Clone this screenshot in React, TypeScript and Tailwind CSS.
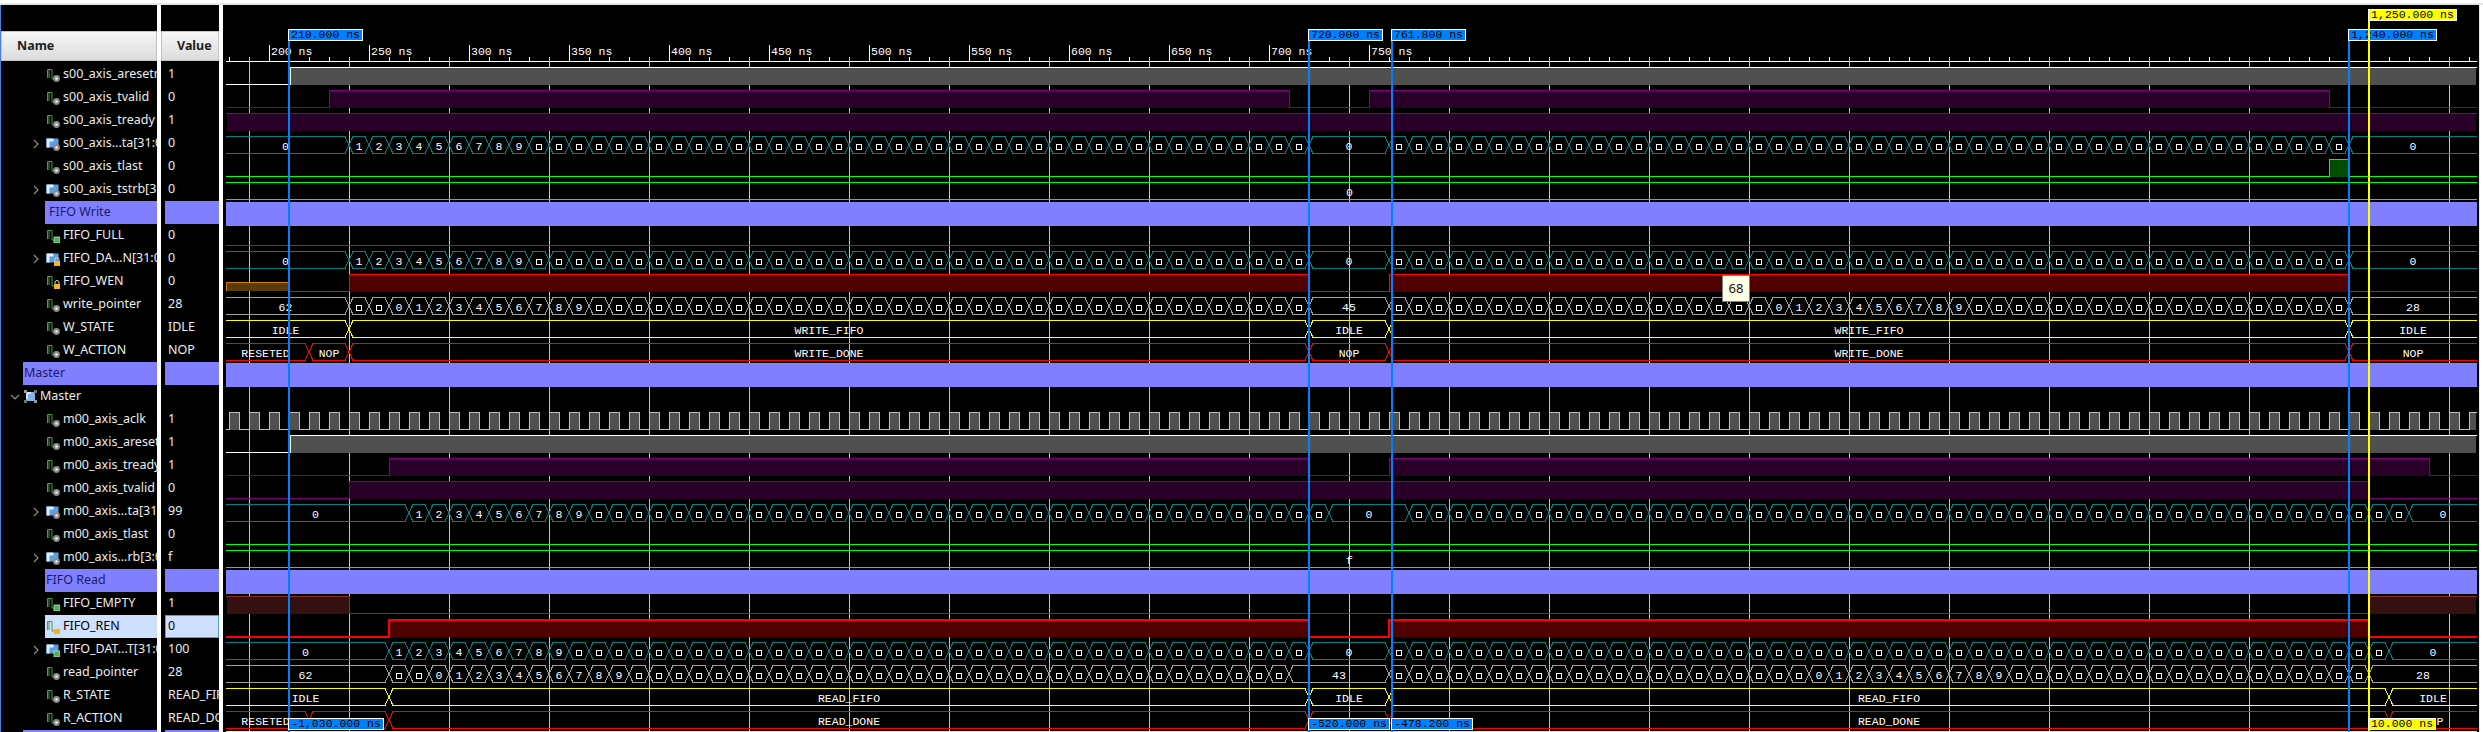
import React from "react";

type Kind = "sig" | "out" | "reg" | "bus" | "busout" | "busreg";
type Row =
  | { t: "signal"; name: string; value: string; icon: Kind; expand?: boolean; selected?: boolean }
  | { t: "divider"; name: string; cls: string }
  | { t: "scope"; name: string };

const rows: Row[] = [
  { t: "signal", name: "s00_axis_aresetn", value: "1", icon: "sig" },
  { t: "signal", name: "s00_axis_tvalid", value: "0", icon: "sig" },
  { t: "signal", name: "s00_axis_tready", value: "1", icon: "sig" },
  { t: "signal", name: "s00_axis...ta[31:0]", value: "0", icon: "bus", expand: true },
  { t: "signal", name: "s00_axis_tlast", value: "0", icon: "sig" },
  { t: "signal", name: "s00_axis_tstrb[3:0]", value: "0", icon: "bus", expand: true },
  { t: "divider", name: "FIFO Write", cls: "ml-[44px] pl-[4px]" },
  { t: "signal", name: "FIFO_FULL", value: "0", icon: "out" },
  { t: "signal", name: "FIFO_DA...N[31:0]", value: "0", icon: "busreg", expand: true },
  { t: "signal", name: "FIFO_WEN", value: "0", icon: "reg" },
  { t: "signal", name: "write_pointer", value: "28", icon: "sig" },
  { t: "signal", name: "W_STATE", value: "IDLE", icon: "sig" },
  { t: "signal", name: "W_ACTION", value: "NOP", icon: "sig" },
  { t: "divider", name: "Master", cls: "ml-[22px] pl-[1px]" },
  { t: "scope", name: "Master" },
  { t: "signal", name: "m00_axis_aclk", value: "1", icon: "sig" },
  { t: "signal", name: "m00_axis_aresetn", value: "1", icon: "sig" },
  { t: "signal", name: "m00_axis_tready", value: "1", icon: "sig" },
  { t: "signal", name: "m00_axis_tvalid", value: "0", icon: "sig" },
  { t: "signal", name: "m00_axis...ta[31:0]", value: "99", icon: "bus", expand: true },
  { t: "signal", name: "m00_axis_tlast", value: "0", icon: "sig" },
  { t: "signal", name: "m00_axis...rb[3:0]", value: "f", icon: "bus", expand: true },
  { t: "divider", name: "FIFO Read", cls: "ml-[44px] pl-[1px]" },
  { t: "signal", name: "FIFO_EMPTY", value: "1", icon: "out" },
  { t: "signal", name: "FIFO_REN", value: "0", icon: "reg", selected: true },
  { t: "signal", name: "FIFO_DAT...T[31:0]", value: "100", icon: "busout", expand: true },
  { t: "signal", name: "read_pointer", value: "28", icon: "sig" },
  { t: "signal", name: "R_STATE", value: "READ_FIFO", icon: "sig" },
  { t: "signal", name: "R_ACTION", value: "READ_DONE", icon: "sig" },
  { t: "divider", name: "", cls: "ml-[22px]" },
];

function Badge({ kind }: { kind: Kind }) {
  if (kind === "out" || kind === "busout")
    return <rect x="8" y="8" width="6" height="6" fill="#4caf50" stroke="#c8ecc8" strokeWidth="0.7" />;
  if (kind === "reg" || kind === "busreg")
    return (
      <g>
        <path d="M9 9V7.5a2 2 0 0 1 4 0V9" fill="none" stroke="#d8d8d8" strokeWidth="1" />
        <rect x="8" y="9" width="6" height="5" fill="#f0b429" />
      </g>
    );
  return (
    <g>
      <circle cx="10.5" cy="10.5" r="3.4" fill="#8c8c8c" />
      <circle cx="10.5" cy="10.5" r="1.3" fill="#f0f0f0" />
    </g>
  );
}

function SignalIcon({ kind }: { kind: Kind }) {
  const isBus = kind === "bus" || kind === "busout" || kind === "busreg";
  return (
    <svg width="14" height="14" viewBox="0 0 14 14" className="shrink-0">
      {isBus ? (
        <g>
          <rect x="0.5" y="1.5" width="12" height="9" fill="#5aa0e0" />
          <path d="M0.5 1.5h7v3h-4v6h-3z" fill="#d8ecff" />
        </g>
      ) : (
        <path d="M1.5 10V1.5H6V11H9M3 10V1.5" fill="none" stroke="#4a9a4a" strokeWidth="1" />
      )}
      <Badge kind={kind} />
    </svg>
  );
}

function ScopeIcon() {
  return (
    <svg width="13" height="13" viewBox="0 0 13 13" className="shrink-0">
      <rect x="2" y="2" width="9" height="9" fill="#7fb2e8" />
      <path d="M2 2h5v2H4v5H2z" fill="#cfe4fa" />
      <rect x="0" y="0" width="3" height="3" fill="#9a9a9a" />
      <rect x="10" y="0" width="3" height="3" fill="#6f6f6f" />
      <rect x="0" y="10" width="3" height="3" fill="#6f6f6f" />
      <rect x="10" y="10" width="3" height="3" fill="#9a9a9a" />
    </svg>
  );
}

function Chevron({ down }: { down?: boolean }) {
  return (
    <svg width="10" height="10" viewBox="0 0 10 10" className="shrink-0">
      <path d={down ? "M1 3l4 4 4-4" : "M3 1l4 4-4 4"} fill="none" stroke="#8a8a8a" strokeWidth="1.2" />
    </svg>
  );
}

function NameCell({ row }: { row: Row }) {
  if (row.t === "divider")
    return (
      <div className={`h-[23px] flex items-center bg-[#8080ff] text-[#1c1c66] ${row.cls}`}>{row.name}</div>
    );
  if (row.t === "scope")
    return (
      <div className="h-[23px] flex items-center pl-[9px] text-[#ececec]">
        <span className="w-[14px] flex justify-start">
          <Chevron down />
        </span>
        <ScopeIcon />
        <span className="ml-[3px]">{row.name}</span>
      </div>
    );
  return (
    <div className="h-[23px] flex items-center pl-[30px]">
      <span className="w-[14px] shrink-0">{row.expand && <Chevron />}</span>
      <span className={`flex items-center h-full flex-1 min-w-0 pl-[1px] ${row.selected ? "bg-[#cfe0ff] text-black" : "text-[#ececec]"}`}>
        <SignalIcon kind={row.icon} />
        <span className="ml-[3px] whitespace-nowrap">{row.name}</span>
      </span>
    </div>
  );
}

function ValueCell({ row }: { row: Row }) {
  if (row.t === "divider") return <div className="h-[23px] ml-[4px] bg-[#8080ff]" />;
  if (row.t === "scope") return <div className="h-[23px]" />;
  return row.selected ? (
    <div className="h-[23px] ml-[4px] pl-[2px] flex items-center bg-[#cfe0ff] text-black border border-[#5b9bd5]">{row.value}</div>
  ) : (
    <div className="h-[23px] pl-[7px] flex items-center text-[#ececec] whitespace-nowrap">{row.value}</div>
  );
}

const L = 226;
const R = 2477;
const rowTop = (i: number) => 67 + 23 * i;
const SQ = "□";
const waveText = "font-['Liberation_Mono','Courier_New',monospace] text-[11.5px] fill-white";

type Seg = [string, number, number];

function slots(a: number, b: number, label: (k: number) => string): Seg[] {
  const out: Seg[] = [];
  for (let x = a, k = 0; x < b; x += 20, k++) out.push([label(k), x, x + 20]);
  return out;
}
const digit = (from: number) => (k: number) => {
  const d = k - from;
  return d >= 0 && d <= 9 ? String(d) : SQ;
};
const oneToNine = (k: number) => (k < 9 ? String(k + 1) : SQ);

function Bus({ i, color, segs }: { i: number; color: string; segs: Seg[] }) {
  const top = rowTop(i) + 0.5;
  const bot = top + 17;
  const mid = top + 8.5;
  return (
    <g>
      {segs.map(([label, a, b], n) => {
        const al = a <= L;
        const br = b >= R;
        const d =
          (al ? `M${a} ${top}` : `M${a} ${mid}L${a + 4} ${top}`) +
          `L${br ? b : b - 4} ${top}` +
          (br ? `M${b} ${bot}` : `L${b} ${mid}L${b - 4} ${bot}`) +
          `L${al ? a : a + 4} ${bot}` +
          (al ? "" : `L${a} ${mid}`);
        const c = (a + b) / 2 - (al ? 2 : 0);
        return (
          <g key={n}>
            <path d={d} fill="none" stroke={color} />
            {label === SQ ? (
              <rect x={c - 2.5} y={mid - 1} width="5" height="5" fill="none" stroke="#fff" />
            ) : (
              <text x={c} y={mid + 4.5} textAnchor="middle" className={waveText}>
                {label}
              </text>
            )}
          </g>
        );
      })}
    </g>
  );
}

function Flat({ i, color, label }: { i: number; color: string; label?: string }) {
  return <Bus i={i} color={color} segs={[[label ?? "", L, R]]} />;
}

function Bin({
  i,
  line,
  fill,
  high,
  lowLine,
  start = L,
  thick,
}: {
  i: number;
  line: string;
  fill: string;
  high: [number, number][];
  lowLine?: string;
  start?: number;
  thick?: boolean;
}) {
  const off = thick ? 1 : 0.5;
  const top = rowTop(i) + off;
  const bot = rowTop(i) + 17 + off;
  const points: string[] = [];
  let x = start;
  const hi = high.slice().sort((a, b) => a[0] - b[0]);
  points.push(`${start},${hi.length && hi[0][0] <= start ? top : bot}`);
  hi.forEach(([a, b]) => {
    if (a > x) points.push(`${a},${bot}`);
    points.push(`${a},${top}`, `${b},${top}`);
    if (b < R) points.push(`${b},${bot}`);
    x = b;
  });
  if (x < R) points.push(`${R},${bot}`);
  return (
    <g>
      {hi.map(([a, b], n) => (
        <rect key={n} x={a + 1} y={rowTop(i) + 1} width={Math.min(b, R - 1) - a - 1} height="17" fill={fill} />
      ))}
      <polyline points={points.join(" ")} fill="none" stroke={lowLine ?? line} strokeWidth={thick ? 2 : 1} />
    </g>
  );
}

const majors = Array.from({ length: 12 }, (_, k) => 200 + 50 * k);
const minors = Array.from({ length: 113 }, (_, k) => 229 + 20 * k);
const grids = Array.from({ length: 23 }, (_, k) => 249 + 100 * k);
const clockHigh: [number, number][] = Array.from({ length: 113 }, (_, k) => [229 + 20 * k, Math.min(239 + 20 * k, R)]);

const TEAL = "#008080";
const GREY = "#a0a0a0";
const YEL = "#ffff00";
const RED = "#ff0000";
const GRN = "#00ff00";
const PUR = "#800080";
const PF = "#280028";

const dataWrite: Seg[] = [["0", L, 349], ...slots(349, 1309, oneToNine), ["0", 1309, 1389], ...slots(1389, 2349, () => SQ), ["0", 2349, R]];

function Waves() {
  return (
    <svg width="2256" height="727" viewBox="223 5 2256 727" shapeRendering="crispEdges" className="block">
      <defs>
        <clipPath id="rulerClip">
          <rect x={L} y="5" width={R - L + 1} height="60" />
        </clipPath>
      </defs>
      <g clipPath="url(#rulerClip)">
        <rect x={L} y="61" width={R - L} height="1" fill="#fff" />
        {minors.map((x) => (
          <rect key={x} x={x} y="57" width="1" height="4" fill="#fff" />
        ))}
        {majors.map((t) => {
          const x = 2 * t - 131;
          return (
            <g key={t}>
              <rect x={x} y="45" width="1" height="16" fill="#fff" />
              <text x={x + 2} y="54.5" className={waveText}>
                {t.toLocaleString("en-US")} ns
              </text>
            </g>
          );
        })}
      </g>
      {grids.map((x) => (
        <rect key={x} x={x} y="57" width="1" height="675" fill="#c4c4c4" />
      ))}

      <Bin i={0} line="#ffffff" fill="#505050" high={[[290, R]]} />
      <Bin i={1} line={PUR} fill={PF} high={[[329, 1289], [1369, 2329]]} />
      <Bin i={2} line={PUR} fill={PF} high={[[L, R]]} />
      <Bus i={3} color={TEAL} segs={dataWrite} />
      <Bin i={4} line={GRN} fill="#004d00" high={[[2329, 2349]]} />
      <Flat i={5} color={GRN} label="0" />
      <rect x={L} y="202" width={R - L} height="24" fill="#8080ff" />
      <Bin i={7} line="#803030" fill="#300000" high={[]} />
      <Bus i={8} color={TEAL} segs={dataWrite} />
      <rect x="227" y="283" width="61" height="8" fill="#5a3c00" />
      <path d="M226 282.5H288M226.5 283V291" fill="none" stroke="#d08000" />
      <Bin i={9} line={RED} fill="#500000" start={289} high={[[349, 1309], [1389, 2349]]} />
      <Bus i={10} color={GREY} segs={[["62", L, 349], ...slots(349, 1309, digit(2)), ["45", 1309, 1389], ...slots(1389, 2349, digit(19)), ["28", 2349, R]]} />
      <Bus i={11} color={YEL} segs={[["IDLE", L, 349], ["WRITE_FIFO", 349, 1309], ["IDLE", 1309, 1389], ["WRITE_FIFO", 1389, 2349], ["IDLE", 2349, R]]} />
      <Bus i={12} color={RED} segs={[["RESETED", L, 309], ["NOP", 309, 349], ["WRITE_DONE", 349, 1309], ["NOP", 1309, 1389], ["WRITE_DONE", 1389, 2349], ["NOP", 2349, R]]} />
      <rect x={L} y="363" width={R - L} height="24" fill="#8080ff" />

      <Bin i={15} line="#c0c0c0" fill="#505050" high={clockHigh} />
      <Bin i={16} line="#ffffff" fill="#505050" high={[[290, R]]} />
      <Bin i={17} line={PUR} fill={PF} high={[[389, 1309], [1389, 2429]]} />
      <Bin i={18} line={PUR} fill={PF} high={[[349, 2369]]} />
      <Bus i={19} color={TEAL} segs={[["0", L, 409], ...slots(409, 1329, oneToNine), ["0", 1329, 1409], ...slots(1409, 2409, () => SQ), ["0", 2409, R]]} />
      <Bin i={20} line={GRN} fill="#004d00" high={[]} />
      <Flat i={21} color={GRN} label="f" />
      <rect x={L} y="570" width={R - L} height="24" fill="#8080ff" />
      <Bin i={23} line="#8c2a2a" fill="#341010" high={[[L, 349], [2369, R]]} />
      <Bin i={24} line={RED} fill="#500000" high={[[389, 1309], [1389, 2369]]} thick />
      <Bus i={25} color={TEAL} segs={[["0", L, 389], ...slots(389, 1309, oneToNine), ["0", 1309, 1389], ...slots(1389, 2389, () => SQ), ["0", 2389, R]]} />
      <Bus i={26} color={GREY} segs={[["62", L, 389], ...slots(389, 1289, digit(2)), ["43", 1289, 1389], ...slots(1389, 2369, digit(21)), ["28", 2369, R]]} />
      <Bus i={27} color={YEL} segs={[["IDLE", L, 389], ["READ_FIFO", 389, 1309], ["IDLE", 1309, 1389], ["READ_FIFO", 1389, 2389], ["IDLE", 2389, R]]} />
      <Bus i={28} color={RED} segs={[["RESETED", L, 309], ["NOP", 309, 389], ["READ_DONE", 389, 1309], ["NOP", 1309, 1389], ["READ_DONE", 1389, 2389], ["NOP", 2389, R]]} />
      <rect x={L} y="731" width={R - L} height="1" fill="#e6e6a8" />
    </svg>
  );
}

const markerCls =
  "absolute h-[12px] flex items-center justify-center border border-white text-black whitespace-nowrap font-['Liberation_Mono','Courier_New',monospace] text-[11.5px] leading-none";

export default function App() {
  return (
    <div className="w-[2483px] h-[732px] bg-white overflow-hidden flex flex-col font-['Noto_Sans',Arial,sans-serif] text-[12.5px]">
      <div className="h-[3px] bg-white shrink-0" />
      <div className="h-[2px] bg-[#e6e6e6] shrink-0" />
      <div className="flex flex-1 min-h-0">
        <div className="w-px bg-[#4a7fd4] shrink-0" />
        <div className="w-[156px] shrink-0 bg-black overflow-hidden">
          <div className="h-[26px]" />
          <div className="h-[30px] mb-[2px] pl-[15px] flex items-center font-bold text-[#222] bg-gradient-to-b from-[#f6f6f6] to-[#dcdcdc] border border-[#c4c4c4]">
            Name
          </div>
          {rows.map((r, i) => (
            <NameCell key={i} row={r} />
          ))}
        </div>
        <div className="w-[4px] shrink-0" />
        <div className="w-[58px] shrink-0 bg-black overflow-hidden">
          <div className="h-[26px]" />
          <div className="h-[30px] mb-[2px] pl-[15px] flex items-center font-bold text-[#222] bg-gradient-to-b from-[#f6f6f6] to-[#dcdcdc] border border-[#c4c4c4]">
            Value
          </div>
          {rows.map((r, i) => (
            <ValueCell key={i} row={r} />
          ))}
        </div>
        <div className="w-[4px] shrink-0" />
        <div className="relative w-[2256px] shrink-0 bg-black overflow-hidden">
          <Waves />
          <div className={`${markerCls} left-[65px] top-[24px] w-[75px] bg-[#0080ff]`}>210.000 ns</div>
          <div className={`${markerCls} left-[1085px] top-[24px] w-[75px] bg-[#0080ff]`}>720.000 ns</div>
          <div className={`${markerCls} left-[1168px] top-[24px] w-[75px] bg-[#0080ff]`}>761.800 ns</div>
          <div className={`${markerCls} left-[2125px] top-[24px] w-[89px] bg-[#0080ff]`}>1,240.000 ns</div>
          <div className="absolute left-[65px] top-[36px] bottom-0 w-[2px] bg-[#0080ff]" />
          <div className="absolute left-[1085px] top-[36px] bottom-0 w-[2px] bg-[#0080ff]" />
          <div className="absolute left-[1168px] top-[36px] bottom-0 w-[2px] bg-[#0080ff]" />
          <div className="absolute left-[2125px] top-[36px] bottom-0 w-[2px] bg-[#0080ff]" />
          <div className="absolute left-[2145px] top-[16px] bottom-0 w-[2px] bg-[#ffff00]" />
          <div className={`${markerCls} left-[2145px] top-[4px] w-[89px] bg-[#ffff00]`}>1,250.000 ns</div>
          <div className={`${markerCls} left-[65px] top-[713px] w-[96px] bg-[#0080ff]`}>-1,030.000 ns</div>
          <div className={`${markerCls} left-[1085px] top-[713px] w-[82px] bg-[#0080ff]`}>-520.000 ns</div>
          <div className={`${markerCls} left-[1168px] top-[713px] w-[82px] bg-[#0080ff]`}>-478.200 ns</div>
          <div className={`${markerCls} left-[2145px] top-[713px] w-[68px] bg-[#ffff00]`}>10.000 ns</div>
          <div className="absolute left-[1499px] top-[270px] w-[28px] h-[27px] flex items-center justify-center bg-[#ffffe6] border border-[#808080] text-[13px] text-[#111]">
            68
          </div>
        </div>
        <div className="flex-1 border-l border-[#e6e6e6]" />
      </div>
    </div>
  );
}
